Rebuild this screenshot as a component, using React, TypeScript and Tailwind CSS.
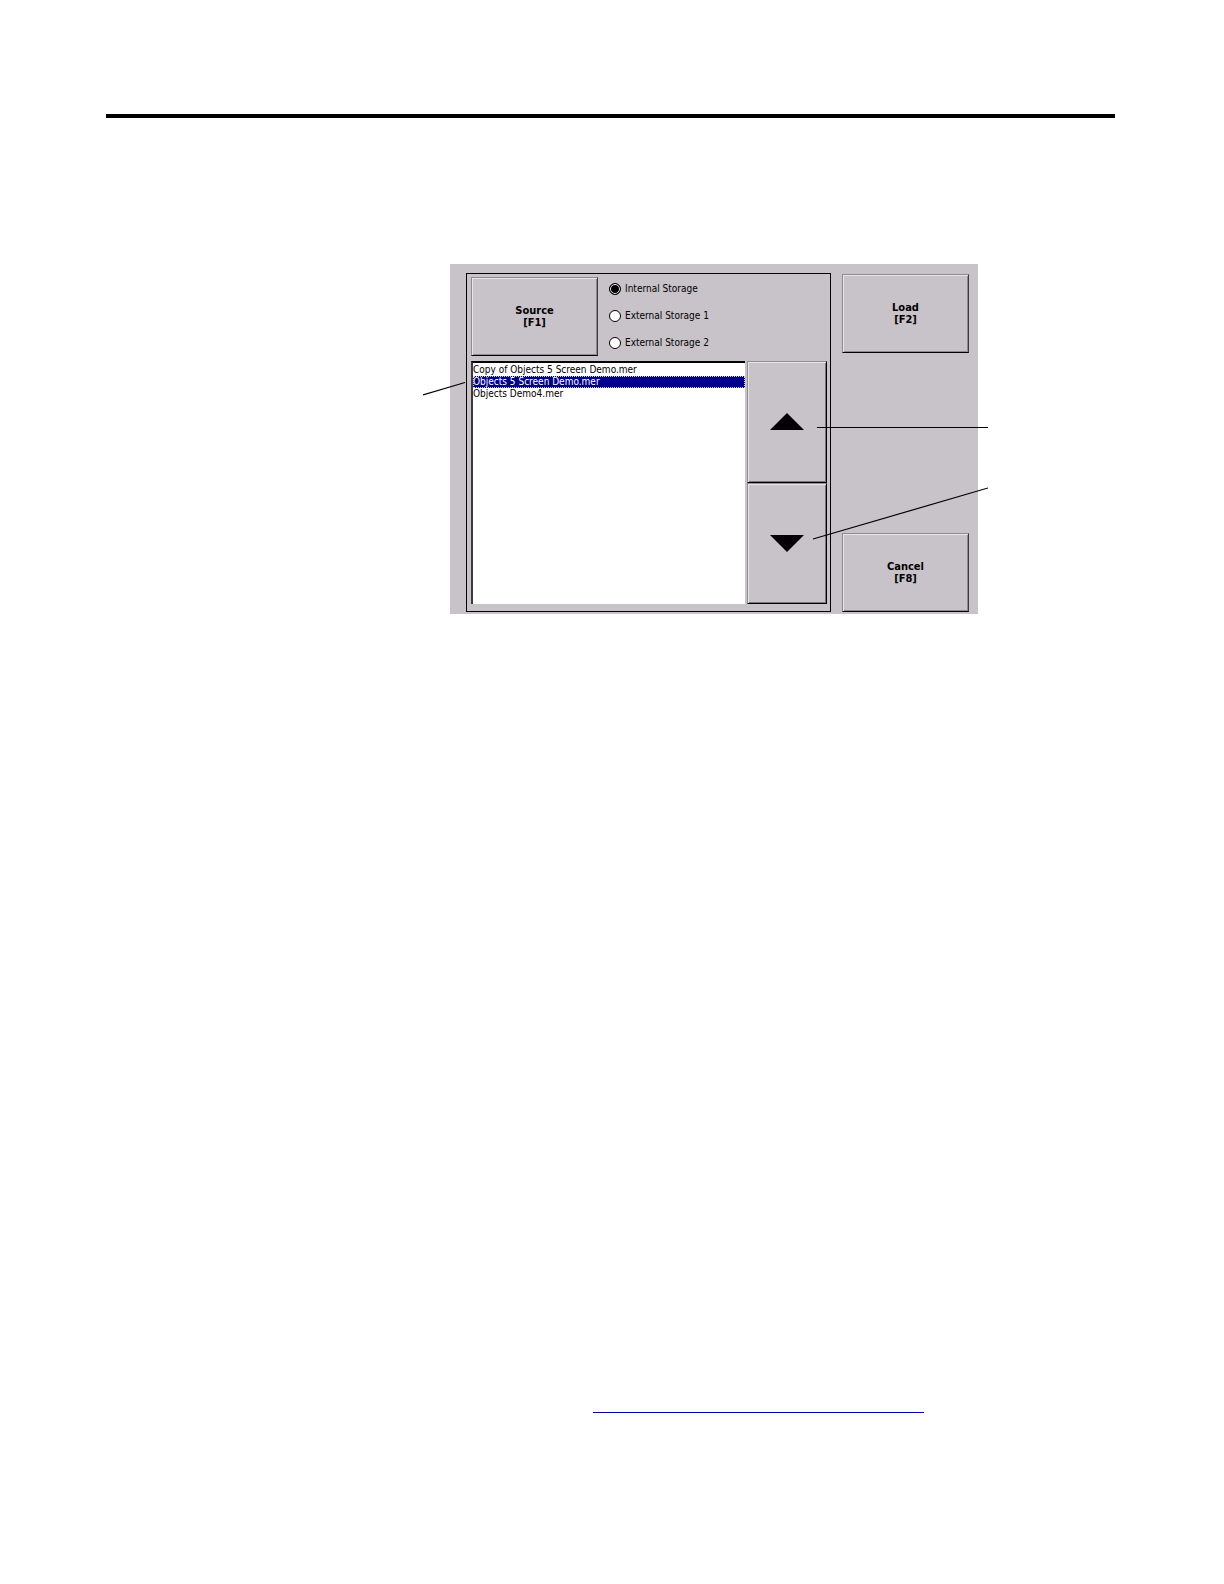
import { useState } from "react";
import type { ReactNode } from "react";

const sources = ["Internal Storage", "External Storage 1", "External Storage 2"];
const files = [
  "Copy of Objects 5 Screen Demo.mer",
  "Objects 5 Screen Demo.mer",
  "Objects Demo4.mer",
];

function PanelButton({ children }: { children: ReactNode }) {
  return (
    <button
      type="button"
      className="h-[79px] w-[127px] shrink-0 border border-t-[#8e8a90] border-r-[#3c383e] border-b-black border-l-[#8e8a90] text-[11px] leading-3 font-bold shadow-[inset_1px_1px_0_#e8e4e8,inset_-1px_-1px_0_#8e8a90]"
    >
      {children}
    </button>
  );
}

function ArrowButton({ label, points, onClick }: { label: string; points: string; onClick: () => void }) {
  return (
    <button
      type="button"
      aria-label={label}
      onClick={onClick}
      className="flex flex-1 items-center justify-center border border-t-[#8e8a90] border-r-black border-b-black border-l-[#8e8a90] shadow-[inset_1px_1px_0_#e8e4e8,inset_-1px_-1px_0_#77737a]"
    >
      <svg width="34" height="17" viewBox="0 0 34 17" aria-hidden="true">
        <polygon points={points} fill="#050006" />
      </svg>
    </button>
  );
}

export default function App() {
  const [source, setSource] = useState(0);
  const [selected, setSelected] = useState(1);

  return (
    <main className="min-h-screen bg-white pt-[114px] pr-[109px] pb-40 pl-[106px] font-['DejaVu_Sans_Condensed','DejaVu_Sans',sans-serif] text-black">
      <hr className="h-1 border-0 bg-black" />

      <figure className="relative mt-[146px] ml-[344px] w-[528px]">
        <div className="flex h-[350px] gap-[11px] bg-[#c8c3c8] pt-[9px] pr-[9px] pb-[2px] pl-4">
          <section className="flex flex-1 flex-col gap-[5px] border border-black pt-[3px] pr-[3px] pb-[7px] pl-1">
            <div className="flex gap-[11px]">
              <PanelButton>
                Source
                <br />
                [F1]
              </PanelButton>
              <fieldset className="flex flex-col gap-3 pt-1">
                {sources.map((name, i) => (
                  <label key={name} className="flex h-[15px] items-center gap-1 text-[10px] leading-3">
                    <input
                      type="radio"
                      name="source"
                      checked={source === i}
                      onChange={() => setSource(i)}
                      className="size-3 appearance-none rounded-full border border-black bg-white checked:bg-black checked:shadow-[inset_0_0_0_1px_#fff]"
                    />
                    {name}
                  </label>
                ))}
              </fieldset>
            </div>

            <div className="flex flex-1 gap-[2px]">
              <ul
                role="listbox"
                aria-label="Files"
                className="flex-1 border-t-2 border-l-2 border-t-black border-l-[#3c383e] bg-white pt-px text-[10px] leading-3"
              >
                {files.map((name, i) => (
                  <li
                    key={name}
                    role="option"
                    aria-selected={selected === i}
                    onClick={() => setSelected(i)}
                    className="h-[12px] aria-selected:bg-[#00008a] aria-selected:text-white aria-selected:outline aria-selected:-outline-offset-1 aria-selected:outline-dotted aria-selected:outline-[#d8d8a0]"
                  >
                    {name}
                  </li>
                ))}
              </ul>
              <div className="flex w-20 flex-col">
                <ArrowButton
                  label="Move up"
                  points="17,0 34,17 0,17"
                  onClick={() => setSelected(Math.max(0, selected - 1))}
                />
                <ArrowButton
                  label="Move down"
                  points="0,0 34,0 17,17"
                  onClick={() => setSelected(Math.min(files.length - 1, selected + 1))}
                />
              </div>
            </div>
          </section>

          <div className="flex flex-col justify-between pt-px">
            <PanelButton>
              Load
              <br />
              [F2]
            </PanelButton>
            <PanelButton>
              Cancel
              <br />
              [F8]
            </PanelButton>
          </div>
        </div>

        {/* Callout leader lines */}
        <svg
          className="pointer-events-none absolute top-0 -left-[27px]"
          width="565"
          height="350"
          viewBox="0 0 565 350"
          stroke="#000"
          strokeWidth="1.2"
          aria-hidden="true"
        >
          <line x1="0" y1="131" x2="42" y2="118.5" />
          <line x1="394" y1="163.5" x2="565" y2="163.5" />
          <line x1="390" y1="275" x2="565" y2="224" />
        </svg>
      </figure>

      <a
        href="#literature"
        aria-label="Literature"
        className="mt-[782px] ml-[487px] block h-[17px] w-[331px] border-b border-[#0000a8]"
      />
    </main>
  );
}
